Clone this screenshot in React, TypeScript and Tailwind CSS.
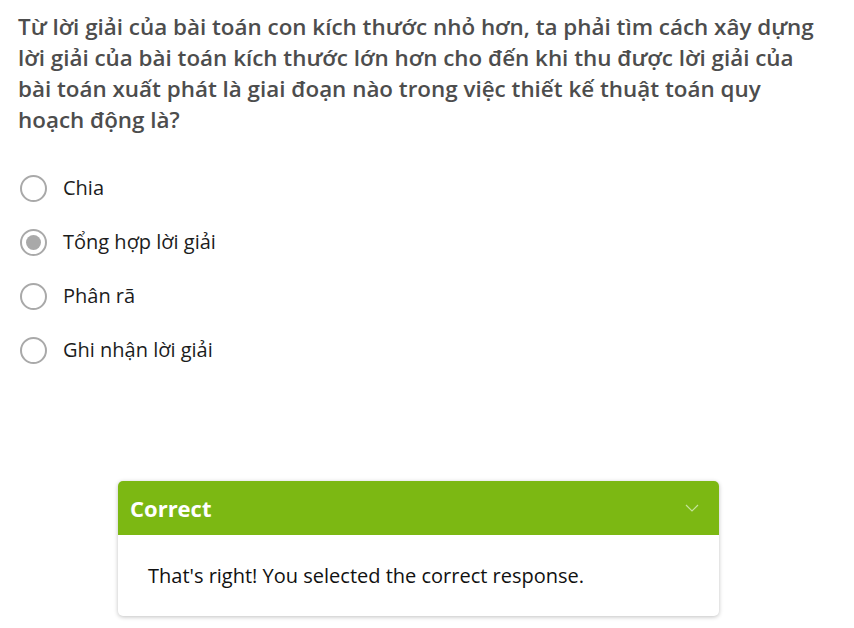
export default function App() {
  const options = ["Chia", "Tổng hợp lời giải", "Phân rã", "Ghi nhận lời giải"];
  const selected = 1;

  return (
    <div className="w-[854px] h-[628px] bg-white overflow-hidden font-['Open_Sans',sans-serif]">
      <div className="pl-[18px] pr-[30px] pt-[11px]">
        {/* Question */}
        <p className="text-[22.4px] leading-[31px] font-semibold text-[#4d4d4d]">
          Từ lời giải của bài toán con kích thước nhỏ hơn, ta phải tìm cách xây dựng lời giải của bài
          toán kích thước lớn hơn cho đến khi thu được lời giải của bài toán xuất phát là giai đoạn nào
          trong việc thiết kế thuật toán quy hoạch động là?
        </p>

        {/* Options */}
        <div className="mt-[39px] flex flex-col gap-[26px]">
          {options.map((opt, i) => (
            <div key={opt} className="flex items-center h-[28px]">
              <div className="ml-[2px] w-[27px] h-[27px] rounded-full border-[2.5px] border-[#a9a9a9] flex items-center justify-center">
                {i === selected && <div className="w-[15px] h-[15px] rounded-full bg-[#a9a9a9]"></div>}
              </div>
              <span className="ml-[16px] text-[20px] text-[#1c1c1c]">{opt}</span>
            </div>
          ))}
        </div>
      </div>

      {/* Feedback card */}
      <div className="mt-[117px] ml-[118px] w-[601px] rounded-[5px] bg-white shadow-[0_1px_4px_rgba(0,0,0,0.25)] overflow-hidden">
        <div className="h-[54px] bg-[#7cb813] flex items-center justify-between pl-[12px] pr-[20px]">
          <span className="text-[22px] font-bold text-white">Correct</span>
          <svg width="14" height="8" viewBox="0 0 14 8" fill="none">
            <path d="M1 1l6 6 6-6" stroke="#c4e39a" strokeWidth="1.2" />
          </svg>
        </div>
        <div className="h-[81px] flex items-center pl-[30px]">
          <span className="text-[20px] text-[#111]">That's right! You selected the correct response.</span>
        </div>
      </div>
    </div>
  );
}
